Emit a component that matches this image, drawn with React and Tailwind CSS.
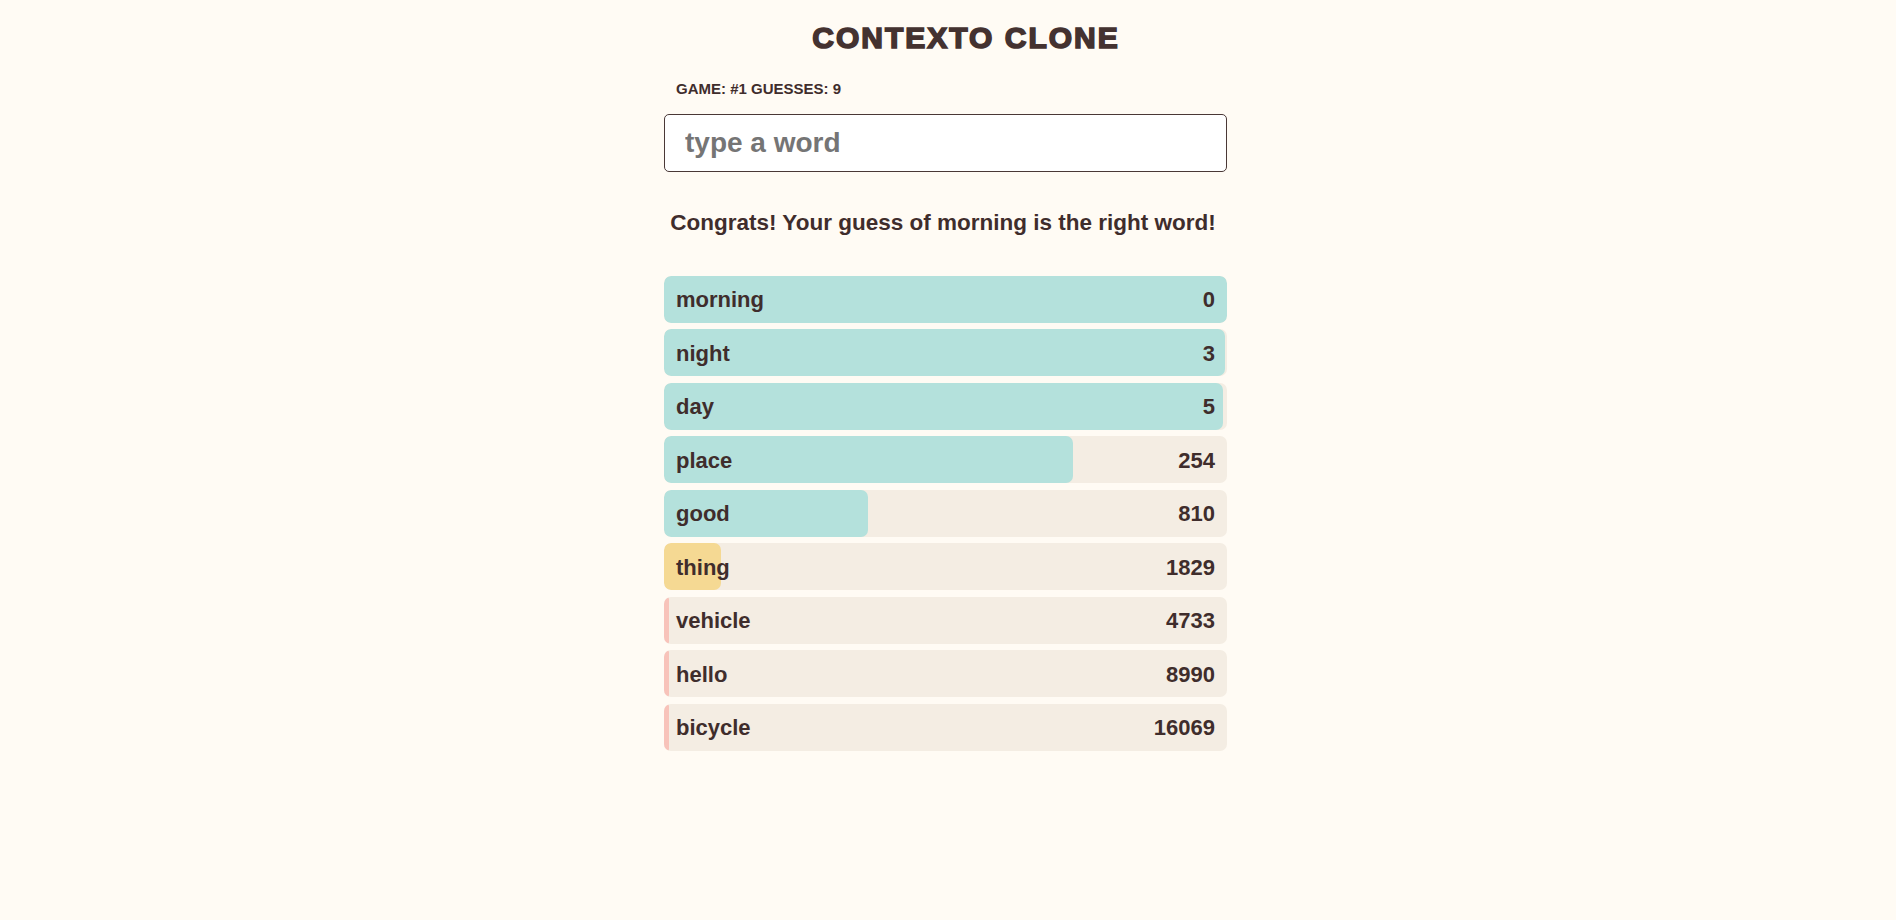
import React from "react";

const guesses = [
  { word: "morning", rank: 0 },
  { word: "night", rank: 3 },
  { word: "day", rank: 5 },
  { word: "place", rank: 254 },
  { word: "good", rank: 810 },
  { word: "thing", rank: 1829 },
  { word: "vehicle", rank: 4733 },
  { word: "hello", rank: 8990 },
  { word: "bicycle", rank: 16069 },
];

function barColor(rank) {
  if (rank < 1000) return "bg-[#b4e1dc]";
  if (rank < 3000) return "bg-[#f5d993]";
  return "bg-[#f8c3ba]";
}

function Row({ word, rank }) {
  const pct = Math.max(100 * Math.exp(-rank / 796), 0.9);
  return (
    <div className="relative h-[47px] rounded-[7px] bg-[#f4ede3] overflow-hidden">
      <div
        className={`absolute left-0 top-0 bottom-0 rounded-[7px] ${barColor(rank)}`}
        style={{ width: `${pct}%` }}
      />
      <div className="relative flex h-full items-center justify-between pl-3 pr-3 pt-[2px] text-[22px] font-bold leading-[26px] text-[#3f2d2c]">
        <span>{word}</span>
        <span>{rank}</span>
      </div>
    </div>
  );
}

export default function App() {
  return (
    <div className="min-h-[920px] w-full bg-[#fffbf4] pr-[5px] font-['Liberation_Sans',Arial,sans-serif] text-[#3f2d2c]">
      <div className="mx-auto flex w-[563px] flex-col">
        <h1 className="mt-[20px] pl-[41px] text-center text-[30px] font-bold leading-[36px] tracking-[2px] text-[#443230] [-webkit-text-stroke:1.6px_#443230]">
          CONTEXTO CLONE
        </h1>
        <div className="mt-[24px] pl-[12px] text-[15px] font-bold leading-[18px]">
          GAME: #1 GUESSES: 9
        </div>
        <input
          type="text"
          placeholder="type a word"
          className="mt-[16px] h-[58px] w-full rounded-[5px] border border-[#4a3836] bg-white pl-[20px] text-[28px] font-bold text-[#3f2d2c] outline-none placeholder:text-[#757575]"
        />
        <p className="mt-[38px] pr-[5px] text-center text-[22.5px] font-bold leading-[26px]">
          Congrats! Your guess of morning is the right word!
        </p>
        <div className="mt-[39.6px] flex flex-col gap-[6.5px]">
          {guesses.map((g) => (
            <Row key={g.word} word={g.word} rank={g.rank} />
          ))}
        </div>
      </div>
    </div>
  );
}
